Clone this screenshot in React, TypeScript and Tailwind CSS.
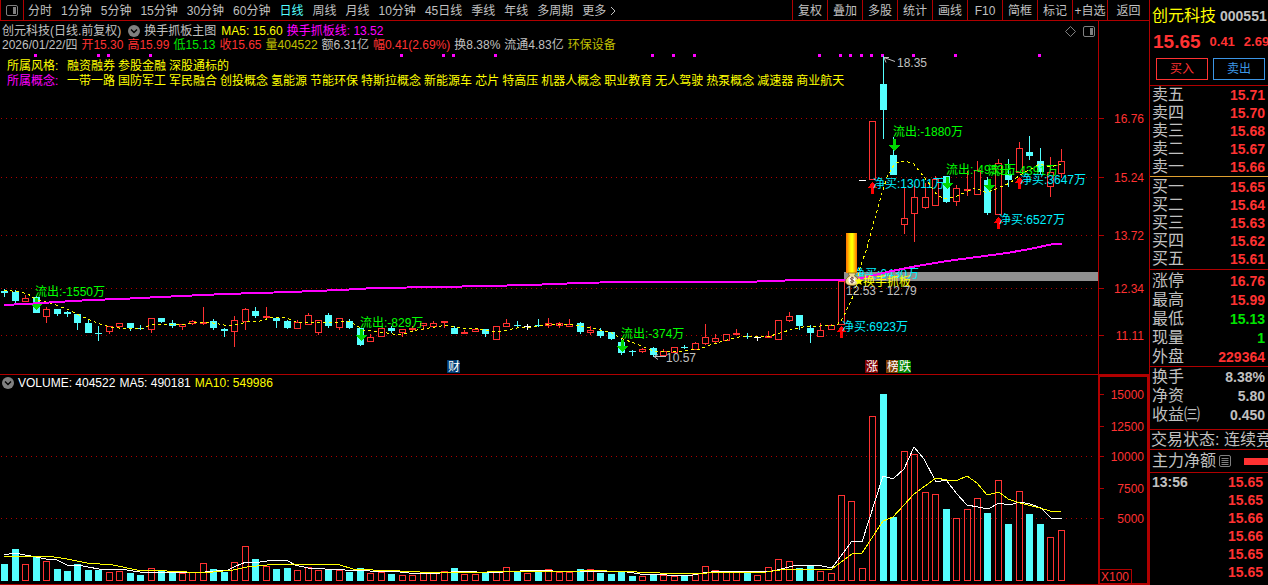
import { ReactNode } from "react";

const RED = "#ff3232";
const LINE = "#b00000";
const CYAN = "#54ffff";
const FONT = "'Liberation Sans','Noto Sans CJK SC',sans-serif";

// r = rising (hollow), s = rising with a thin solid body, d = falling, w = unchanged
type Kind = "r" | "s" | "d" | "w";
// kind, high, low, body top, body bottom, top of the volume bar
type Bar = [Kind, number, number, number, number, number];

const bars: Bar[] = [
  ["d", 289, 297, 291, 293, 564],
  ["d", 290, 303, 292, 301, 549],
  ["r", 295, 302, 298, 302, 564],
  ["d", 296, 313, 297, 313, 557],
  ["r", 307, 323, 309, 317, 561],
  ["d", 309, 316, 309, 314, 569],
  ["d", 311, 317, 312, 314, 571],
  ["d", 314, 330, 314, 323, 564],
  ["d", 320, 333, 323, 333, 570],
  ["d", 326, 341, 333, 334, 570],
  ["r", 326, 334, 326, 332, 572],
  ["r", 323, 328, 323, 327, 571],
  ["d", 323, 331, 323, 328, 573],
  ["d", 325, 330, 328, 329, 575],
  ["r", 318, 333, 318, 330, 568],
  ["d", 318, 323, 318, 322, 571],
  ["d", 320, 328, 323, 326, 572],
  ["r", 324, 330, 324, 327, 573],
  ["r", 320, 325, 321, 324, 572],
  ["s", 307, 325, 322, 324, 563],
  ["d", 319, 330, 321, 328, 569],
  ["d", 328, 337, 329, 331, 572],
  ["r", 316, 347, 320, 332, 562],
  ["r", 308, 330, 309, 322, 546],
  ["d", 307, 318, 311, 316, 559],
  ["s", 307, 318, 316, 318, 566],
  ["d", 317, 328, 318, 321, 569],
  ["d", 320, 329, 321, 328, 568],
  ["r", 320, 329, 322, 329, 570],
  ["r", 313, 325, 315, 325, 567],
  ["r", 320, 335, 320, 333, 570],
  ["d", 313, 328, 315, 326, 570],
  ["r", 318, 330, 318, 328, 570],
  ["d", 319, 329, 321, 328, 572],
  ["d", 328, 346, 328, 345, 568],
  ["r", 334, 342, 337, 342, 573],
  ["r", 328, 337, 328, 337, 572],
  ["d", 326, 333, 328, 331, 574],
  ["r", 329, 337, 329, 333, 575],
  ["s", 326, 331, 328, 330, 575],
  ["r", 323, 330, 323, 326, 573],
  ["r", 321, 327, 323, 327, 572],
  ["s", 321, 328, 321, 323, 571],
  ["d", 326, 334, 328, 334, 568],
  ["s", 330, 334, 332, 334, 574],
  ["r", 328, 332, 329, 332, 574],
  ["d", 329, 337, 329, 334, 573],
  ["r", 326, 340, 326, 340, 571],
  ["r", 319, 327, 323, 327, 567],
  ["d", 321, 328, 325, 326, 572],
  ["w", 324, 330, 326, 327, 573],
  ["d", 319, 327, 325, 326, 572],
  ["r", 318, 328, 323, 326, 569],
  ["r", 322, 328, 323, 326, 572],
  ["r", 319, 327, 324, 327, 572],
  ["d", 322, 334, 323, 332, 569],
  ["r", 326, 335, 330, 333, 569],
  ["d", 328, 338, 331, 336, 573],
  ["d", 332, 340, 332, 339, 574],
  ["d", 339, 355, 342, 353, 571],
  ["d", 350, 356, 351, 352, 576],
  ["r", 348, 353, 349, 352, 576],
  ["d", 347, 357, 348, 355, 575],
  ["r", 349, 356, 351, 356, 575],
  ["r", 347, 353, 347, 353, 576],
  ["d", 345, 349, 347, 348, 576],
  ["r", 342, 350, 343, 350, 573],
  ["r", 324, 345, 337, 344, 566],
  ["r", 334, 343, 338, 342, 570],
  ["r", 334, 341, 334, 341, 572],
  ["s", 329, 335, 333, 335, 572],
  ["d", 333, 339, 336, 337, 573],
  ["w", 336, 341, 337, 338, 575],
  ["s", 331, 338, 336, 338, 567],
  ["r", 320, 340, 320, 340, 559],
  ["r", 312, 322, 316, 321, 561],
  ["d", 315, 330, 315, 326, 568],
  ["d", 325, 343, 328, 333, 566],
  ["r", 323, 337, 330, 337, 571],
  ["r", 324, 330, 325, 330, 573],
  ["r", 281, 325, 281, 325, 495],
  ["r", 240, 272, 240, 272, 501],
  ["w", 180, 181, 180, 181, 568],
  ["r", 121, 180, 121, 180, 416],
  ["d", 56, 139, 84, 110, 394],
  ["d", 137, 175, 155, 175, 517],
  ["r", 187, 234, 218, 225, 451],
  ["r", 186, 242, 197, 214, 454],
  ["r", 183, 209, 197, 208, 492],
  ["r", 176, 206, 179, 206, 494],
  ["d", 176, 203, 176, 202, 509],
  ["r", 185, 206, 188, 202, 518],
  ["s", 171, 196, 189, 191, 509],
  ["r", 161, 195, 170, 195, 498],
  ["d", 177, 215, 180, 213, 513],
  ["r", 159, 215, 163, 215, 480],
  ["d", 159, 187, 174, 180, 524],
  ["r", 142, 173, 148, 173, 491],
  ["d", 136, 160, 152, 156, 514],
  ["d", 148, 175, 161, 172, 524],
  ["r", 157, 197, 172, 187, 537],
  ["r", 149, 178, 161, 174, 530],
];

const barX = (i: number) => Math.floor(4.7 + 10.46 * i);

const ma5 =
  "4,290 20,292 28,294 37,300 50,303 67,309 83,317 100,324 110,327 127,329 143,328 153,324 173,324 187,324 197,322 213,323 230,326 247,322 260,321 273,317 283,317 297,322 320,322 333,323 350,321 363,330 380,332 400,335 417,330 447,325 460,328 480,329 497,332 517,328 533,327 553,324 573,325 587,327 600,330 610,332 620,338 637,344 653,351 667,352 683,351 700,349 713,344 727,340 743,336 767,337 780,333 793,329 803,327 820,326 837,325 843,318 848,307 855,292 860,268 867,248 873,225 880,200 887,177 895,163 903,161 913,163 920,172 928,182 937,195 945,199 957,196 975,188 987,193 1000,187 1010,183 1020,175 1040,164 1050,167 1061,164";
const grabLine =
  "4,305 25,304 57,302 90,300 120,299 160,297 225,294 290,292 340,290 375,288 440,287 485,286 530,285 580,283 620,282 745,282 770,281 800,280 845,280 863,278 887,272 917,266 947,261 977,257 1007,253 1030,249 1053,244 1062,244";
const volMa5 =
  "4,555 15,553 25,555 36,557 46,559 57,560 67,565 78,565 88,567 99,569 120,569 140,572 170,572 205,572 228,570 236,566 246,562 260,562 275,560 288,561 295,565 308,568 325,569 345,570 370,571 400,572 418,574 440,573 463,571 477,572 503,572 520,571 543,570 553,571 600,571 627,572 640,574 667,575 693,575 703,573 720,571 750,571 767,572 777,570 793,566 817,565 832,568 852,541 862,542 883,476 893,479 904,469 914,447 924,459 936,482 946,480 957,494 967,505 978,507 988,509 999,503 1009,505 1020,502 1030,504 1041,508 1051,518 1062,519";
const volMa10 =
  "4,557 15,556 27,557 37,556 48,556 67,559 87,563 113,565 137,570 167,571 187,572 213,572 233,570 247,567 267,565 293,564 340,565 353,569 373,570 400,571 420,572 487,572 510,571 580,571 590,570 607,571 637,572 660,573 680,574 707,573 767,572 780,570 797,569 817,569 832,569 852,554 862,553 883,521 893,517 914,494 936,478 947,480 956,481 967,476 977,483 987,495 999,492 1008,499 1020,503 1040,508 1050,511 1061,512";

const signalDots = [35, 98, 108, 150, 401, 443, 453, 495, 652, 673, 694, 819, 840, 850, 861, 871, 882, 913, 955, 1039];

const priceTicks = [
  { y: 118, label: "16.76" },
  { y: 177, label: "15.24" },
  { y: 235, label: "13.72" },
  { y: 288, label: "12.34" },
  { y: 335, label: "11.11" },
];

const volumeTicks = [
  { y: 394, label: "15000", grid: false },
  { y: 426, label: "12500", grid: false },
  { y: 456, label: "10000", grid: true },
  { y: 488, label: "7500", grid: false },
  { y: 518, label: "5000", grid: true },
];

const outflows = [
  { x: 35, y: 296, tip: 310, text: "流出:-1550万" },
  { x: 360, y: 327, tip: 341, text: "流出:-829万" },
  { x: 621, y: 338, tip: 352, text: "流出:-374万" },
  { x: 893, y: 136, tip: 151, text: "流出:-1880万" },
  { x: 946, y: 174, tip: 189, text: "流出:-4953万" },
  { x: 988, y: 175, tip: 191, text: "流出:-4391万" },
];

const inflows = [
  { x: 841, y: 331, tip: 326, text: "净买:6923万" },
  { x: 872, y: 188, tip: 182, text: "净买:13011万" },
  { x: 998, y: 224, tip: 217, text: "净买:6527万" },
  { x: 1019, y: 184, tip: 177, text: "净买:3647万" },
];

const badges = [
  { x: 447, text: "财", fill: "#003c74" },
  { x: 865, text: "涨", fill: "#800000" },
  { x: 886, text: "榜", fill: "#803c00" },
  { x: 898, text: "跌", fill: "#008000" },
];

const periods = ["分时", "1分钟", "5分钟", "15分钟", "30分钟", "60分钟", "日线", "周线", "月线", "10分钟", "45日线", "季线", "年线", "多周期", "更多"];
const tools = ["复权", "叠加", "多股", "统计", "画线", "F10", "简框", "标记", "+自选"];

const quote = [
  { text: "2026/01/22/四", color: "text-[#c0c0c0]" },
  { text: "开15.30", color: "text-[#ff3232]" },
  { text: "高15.99", color: "text-[#ff3232]" },
  { text: "低15.13", color: "text-[#00e600]" },
  { text: "收15.65", color: "text-[#ff3232]" },
  { text: "量404522", color: "text-[#c0c000]" },
  { text: "额6.31亿", color: "text-[#c0c0c0]" },
  { text: "幅0.41(2.69%)", color: "text-[#ff3232]" },
  { text: "换8.38%", color: "text-[#c0c0c0]" },
  { text: "流通4.83亿", color: "text-[#c0c0c0]" },
  { text: "环保设备", color: "text-[#c0c000]" },
];

const styles = ["融资融券", "参股金融", "深股通标的"];
const concepts = [
  "一带一路",
  "国防军工",
  "军民融合",
  "创投概念",
  "氢能源",
  "节能环保",
  "特斯拉概念",
  "新能源车",
  "芯片",
  "特高压",
  "机器人概念",
  "职业教育",
  "无人驾驶",
  "热泵概念",
  "减速器",
  "商业航天",
];

const asks = [
  ["卖五", "15.71"],
  ["卖四", "15.70"],
  ["卖三", "15.68"],
  ["卖二", "15.67"],
  ["卖一", "15.66"],
];

const bids = [
  ["买一", "15.65"],
  ["买二", "15.64"],
  ["买三", "15.63"],
  ["买四", "15.62"],
  ["买五", "15.61"],
];

const ticks = ["15.65", "15.65", "15.66", "15.66", "15.65", "15.65"];

const PanelIcon = ({ className }: { className: string }) => (
  <svg width="12" height="11" viewBox="0 0 12 11" className={className} fill="none" stroke="currentColor">
    <rect x="0.5" y="0.5" width="11" height="10" rx="1.5" />
    <rect x="7" y="2" width="3" height="7" fill="currentColor" stroke="none" />
  </svg>
);

const ChevronBadge = () => (
  <svg width="12" height="12" viewBox="0 0 12 12" className="shrink-0">
    <circle cx="6" cy="6" r="6" fill="#808080" />
    <path d="M3 4.5 6 7.5 9 4.5" fill="none" stroke="#000" strokeWidth="1.4" />
  </svg>
);

const TopBar = () => (
  <div className="flex h-[21px] border-b border-[#b00000] text-[#c0c0c0]">
    <button aria-label="切换面板" className="flex w-6 shrink-0 items-center justify-center border-x border-[#b00000]">
      <PanelIcon className="text-[#808080]" />
    </button>
    <nav className="ml-1 flex items-center gap-[9px] pt-px">
      {periods.map((name) => (
        <button key={name} className={`flex items-center whitespace-nowrap ${name === "日线" ? "text-[#54ffff]" : ""}`}>
          {name}
          {name === "更多" && (
            <svg width="7" height="10" viewBox="0 0 7 10" className="ml-1" fill="none" stroke="currentColor">
              <path d="M1 1 5 5 1 9" />
            </svg>
          )}
        </button>
      ))}
    </nav>
    <div className="ml-auto flex">
      {tools.map((name) => (
        <button key={name} className="w-[35px] border-l border-[#b00000] pt-px text-center whitespace-nowrap">
          {name}
        </button>
      ))}
      <button className="w-[42px] border-l border-[#b00000] pt-px text-center">返回</button>
    </div>
  </div>
);

const ArrowDown = ({ x, tip }: { x: number; tip: number }) => (
  <path d={`M${x - 1} ${tip - 12}h3v6h4l-5 6h-1l-5 -6h4z`} fill="#00d800" />
);

const ArrowUp = ({ x, tip }: { x: number; tip: number }) => (
  <path d={`M${x} ${tip}h1l4 6h-3v6h-3v-6h-3z`} fill="#ff0000" />
);

const Candle = ({ bar, x }: { bar: Bar; x: number }) => {
  const [kind, high, low, top, bottom] = bar;
  if (kind === "r") {
    return (
      <g fill={RED}>
        {top > high && <rect x={x} y={high} width="1" height={top - high} />}
        {low > bottom && <rect x={x} y={bottom} width="1" height={low - bottom} />}
        <rect x={x - 2.5} y={top + 0.5} width="6" height={Math.max(bottom - top - 1, 1)} fill="#000" stroke={RED} />
      </g>
    );
  }
  const color = kind === "s" ? RED : kind === "d" ? CYAN : "#fff";
  return (
    <g fill={color}>
      <rect x={x} y={high} width="1" height={low - high} />
      <rect x={x - 3} y={top} width="7" height={bottom - top} />
    </g>
  );
};

const PriceChart = () => (
  <svg viewBox="0 21 1149 354" className="h-auto w-full [grid-area:1/1]" fontFamily={FONT} fontSize="12" shapeRendering="crispEdges">
    <defs>
      <linearGradient id="column">
        <stop offset="0" stopColor="#ff6a00" />
        <stop offset="0.45" stopColor="#ffff00" />
        <stop offset="0.6" stopColor="#ffff00" />
        <stop offset="1" stopColor="#ff6a00" />
      </linearGradient>
    </defs>

    {priceTicks.map((t) => (
      <g key={t.label}>
        <path d={`M1 ${t.y + 0.5}H1095`} stroke={LINE} strokeDasharray="1 4" />
        <path d={`M1099 ${t.y + 0.5}h5`} stroke={LINE} />
        <text x="1144" y={t.y + 5} textAnchor="end" fill={RED}>
          {t.label}
        </text>
      </g>
    ))}
    <rect x="844" y="272" width="254" height="9" fill="#909090" />
    <path d="M1098.5 21V375M0 374.5H1149" stroke={LINE} />

    {signalDots.map((x) => (
      <rect key={x} x={x - 1} y="54" width="3" height="3" fill="#ff00ff" />
    ))}
    {bars.map((bar, i) => (
      <Candle key={i} bar={bar} x={barX(i)} />
    ))}

    {outflows.map((f) => (
      <g key={f.text}>
        <ArrowDown x={f.x + 1} tip={f.tip} />
        <text x={f.x} y={f.y} fill="#00ff00">
          {f.text}
        </text>
      </g>
    ))}
    {inflows.map((f) => (
      <g key={f.text}>
        <ArrowUp x={f.x} tip={f.tip} />
        <text x={f.x + 1} y={f.y} fill="#00f0ff">
          {f.text}
        </text>
      </g>
    ))}

    <text x="853" y="278" fill="#00f0ff">
      净买:6430万
    </text>
    <polyline points={grabLine} fill="none" stroke="#ff00ff" strokeWidth="2" />
    <polyline points={ma5} fill="none" stroke="#ffff00" strokeDasharray="3 3" />

    <rect x="846" y="233" width="11" height="40" fill="url(#column)" />
    <g shapeRendering="auto">
      <path d="M848 273h8l-1.500 3c2 .8 4 3 4 5.200 0 3-3 4.300-6.500 4.300s-6.500-1.300-6.500-4.300c0-2.200 2-4.400 4-5.200z" fill="#f0dc90" stroke="#806018" strokeWidth="0.8" />
      <circle cx="852" cy="280" r="3.500" fill="#fff" />
      <path d="M854 278.300c-1-1-3.600-.8-3.600.5 0 1.400 3.500 1 3.500 2.400 0 1.400-2.700 1.500-3.800.4M852 276.500v7" fill="none" stroke="#704030" />
      <path d="m859 277 1.200 2.800 3.200.2-2.500 2 1 3-2.900-1.600-2.700 1.600.8-3-2.300-2 3-.2z" fill="#ffff00" />
    </g>
    <text x="863" y="286" fill="#ffff00">
      换手抓板
    </text>
    <text x="846" y="295" fill="#c0c0c0">
      12.53 - 12.79
    </text>

    <g fill="none" stroke="#c0c0c0" shapeRendering="auto">
      <path d="M884 57.500 895 61.500M884 57.500h5M884 57.500l2 5" />
      <path d="M654 356.500h12M654 356.500l4-2M654 356.500l4 3" />
    </g>
    <text x="897" y="67" fill="#c0c0c0">
      18.35
    </text>
    <text x="666" y="362" fill="#c0c0c0">
      10.57
    </text>

    {badges.map((b) => (
      <g key={b.text}>
        <path d={`M${b.x} 360h11l2 2v11h-13z`} fill={b.fill} />
        <text x={b.x + 1} y="371" fill="#fff">
          {b.text}
        </text>
      </g>
    ))}
  </svg>
);

const VolumeChart = () => (
  <svg viewBox="0 375 1149 210" className="h-auto w-full [grid-area:1/1]" fontFamily={FONT} fontSize="12" shapeRendering="crispEdges">
    {volumeTicks.map((t) => (
      <g key={t.label}>
        {t.grid && <path d={`M1 ${t.y + 0.5}H1095`} stroke={LINE} strokeDasharray="1 4" />}
        <path d={`M1099 ${t.y + 0.5}h5`} stroke={LINE} />
        <text x="1144" y={t.y + 5} textAnchor="end" fill={RED}>
          {t.label}
        </text>
      </g>
    ))}
    {bars.map(([kind, , , , , top], i) =>
      kind === "d" ? (
        <rect key={i} x={barX(i) - 3} y={top} width="7" height={581 - top} fill={CYAN} />
      ) : (
        <rect key={i} x={barX(i) - 2.5} y={top + 0.5} width="6" height={580 - top} fill="none" stroke={RED} />
      )
    )}
    <polyline points={volMa5} fill="none" stroke="#fff" />
    <polyline points={volMa10} fill="none" stroke="#ffff00" />
    <path d="M0 584.500H1149" stroke={LINE} />
    <rect x="1099" y="376" width="49" height="208" fill="none" stroke={LINE} strokeWidth="2" />
    <path d="M1100 569.500h31.500V583" fill="none" stroke={LINE} />
    <text x="1101" y="581" fill={RED}>
      X100
    </text>
  </svg>
);

const Row = ({ label, value, color = "text-[#ff3232]", height = "h-[19px]" }: { label: string; value: string; color?: string; height?: string }) => (
  <tr className={height}>
    <th scope="row" className="p-0 text-left text-base leading-[18px] font-normal">
      {label}
    </th>
    <td className={`p-0 text-right text-sm leading-[18px] font-bold ${color}`}>{value}</td>
  </tr>
);

const Block = ({ children, className }: { children: ReactNode; className: string }) => (
  <div className={`border-b pr-[3px] pl-0.5 ${className}`}>
    <table className="w-full border-collapse">
      <tbody>{children}</tbody>
    </table>
  </div>
);

const QuotePanel = () => (
  <aside className="w-[119px] shrink-0 overflow-hidden border-l border-[#b00000] text-[#c0c0c0]">
    <div className="h-[86px] border-b border-[#b00000] pt-1">
      <div className="flex h-6 items-center gap-1 pl-0.5 whitespace-nowrap">
        <h1 className="text-base text-[#ffff00]">创元科技</h1>
        <span className="text-sm font-bold">000551</span>
      </div>
      <div className="flex h-7 items-center gap-[9px] pl-[3px] font-bold whitespace-nowrap text-[#ff3232]">
        <span className="text-[19px]">15.65</span>
        <span className="text-[13px]">0.41</span>
        <span className="text-[13px]">2.69%</span>
      </div>
      <div className="mt-0.5 flex gap-[5px] pr-[3px] pl-[6px]">
        <button className="h-[22px] flex-1 border border-[#ff3232] text-[#ff3232]">买入</button>
        <button className="h-[22px] flex-1 border border-[#3c96e6] text-[#3c96e6]">卖出</button>
      </div>
    </div>
    <Block className="border-[#e0a030]">
      {asks.map(([label, value]) => (
        <Row key={label} label={label} value={value} height="h-[18px]" />
      ))}
    </Block>
    <Block className="border-[#b00000] py-px">
      {bids.map(([label, value]) => (
        <Row key={label} label={label} value={value} height="h-[18px]" />
      ))}
    </Block>
    <Block className="border-[#b00000] pt-px">
      <Row label="涨停" value="16.76" />
      <Row label="最高" value="15.99" />
      <Row label="最低" value="15.13" color="text-[#00e600]" />
      <Row label="现量" value="1" color="text-[#00e600]" />
      <Row label="外盘" value="229364" />
    </Block>
    <Block className="border-[#b00000] pb-[5px]">
      <Row label="换手" value="8.38%" color="text-[#c0c0c0]" />
      <Row label="净资" value="5.80" color="text-[#c0c0c0]" />
      <Row label="收益㈢" value="0.450" color="text-[#c0c0c0]" />
    </Block>
    <div className="h-5 border-b border-[#b00000] pl-px text-base leading-[19px] whitespace-nowrap">交易状态: 连续竞价</div>
    <div className="flex h-[23px] items-center border-b border-[#b00000] pl-0.5">
      <span className="text-base whitespace-nowrap">主力净额</span>
      <svg width="12" height="12" viewBox="0 0 12 12" className="ml-[3px] shrink-0" fill="none" stroke="#808080">
        <rect x="0.5" y="0.5" width="11" height="11" rx="1.5" />
        <path d="M2.500 3.500h7M2.500 5.500h7M2.500 7.500h7M2.500 9.500h7" />
      </svg>
      <div className="ml-[13px] h-[7px] flex-1 bg-[#ff3232]" />
    </div>
    <table className="w-full border-collapse text-sm font-bold">
      <tbody>
        {ticks.map((price, i) => (
          <tr key={i} className="h-[18px]">
            <td className="p-0 pl-0.5 leading-[18px]">{i === 0 ? "13:56" : ""}</td>
            <td className="p-0 pr-[5px] text-right leading-[18px] text-[#ff3232]">{price}</td>
          </tr>
        ))}
      </tbody>
    </table>
  </aside>
);

const App = () => {
  return (
    <div className="flex min-h-screen overflow-hidden bg-black font-['Liberation_Sans','Noto_Sans_CJK_SC',sans-serif] text-[12px] leading-[14px]">
      <main className="min-w-0 flex-1">
        <TopBar />

        {/* Price */}
        <section className="grid">
          <PriceChart />
          <div className="z-10 whitespace-nowrap [grid-area:1/1]">
            <div className="mt-[3px] flex h-[14px] items-center pr-[54px] pl-0.5 text-[#c0c0c0]">
              <span>创元科技(日线.前复权)</span>
              <button aria-label="指标菜单" className="mr-1 ml-[7px]">
                <ChevronBadge />
              </button>
              <span>换手抓板主图</span>
              <span className="ml-[5px] text-[#ffff00]">MA5: 15.60</span>
              <span className="ml-1 text-[#ff00ff]">换手抓板线: 13.52</span>
              <svg width="11" height="11" viewBox="0 0 11 11" className="ml-auto" fill="none" stroke="#808080">
                <path d="M5.500.5 10.500 5.500 5.500 10.500.5 5.500z" />
              </svg>
              <PanelIcon className="ml-[7px] text-[#808080]" />
            </div>
            <div className="flex gap-1 pl-0.5">
              {quote.map((q) => (
                <span key={q.text} className={q.color}>
                  {q.text}
                </span>
              ))}
            </div>
            <dl className="mt-[7px] grid grid-cols-[60px_1fr] pl-[7px] leading-[15px] text-[#ffff00]">
              <dt>所属风格:</dt>
              <dd className="flex gap-[3px]">
                {styles.map((name) => (
                  <span key={name}>{name}</span>
                ))}
              </dd>
              <dt className="text-[#ff00ff]">所属概念:</dt>
              <dd className="flex gap-[3px]">
                {concepts.map((name) => (
                  <span key={name}>{name}</span>
                ))}
              </dd>
            </dl>
          </div>
        </section>

        {/* Volume */}
        <section className="grid">
          <VolumeChart />
          <div className="z-10 flex h-4 items-center gap-1 pl-0.5 text-white [grid-area:1/1]">
            <button aria-label="成交量菜单">
              <ChevronBadge />
            </button>
            <span>VOLUME: 404522</span>
            <span>MA5: 490181</span>
            <span className="text-[#ffff00]">MA10: 549986</span>
          </div>
        </section>
      </main>
      <QuotePanel />
    </div>
  );
};

export default App;
